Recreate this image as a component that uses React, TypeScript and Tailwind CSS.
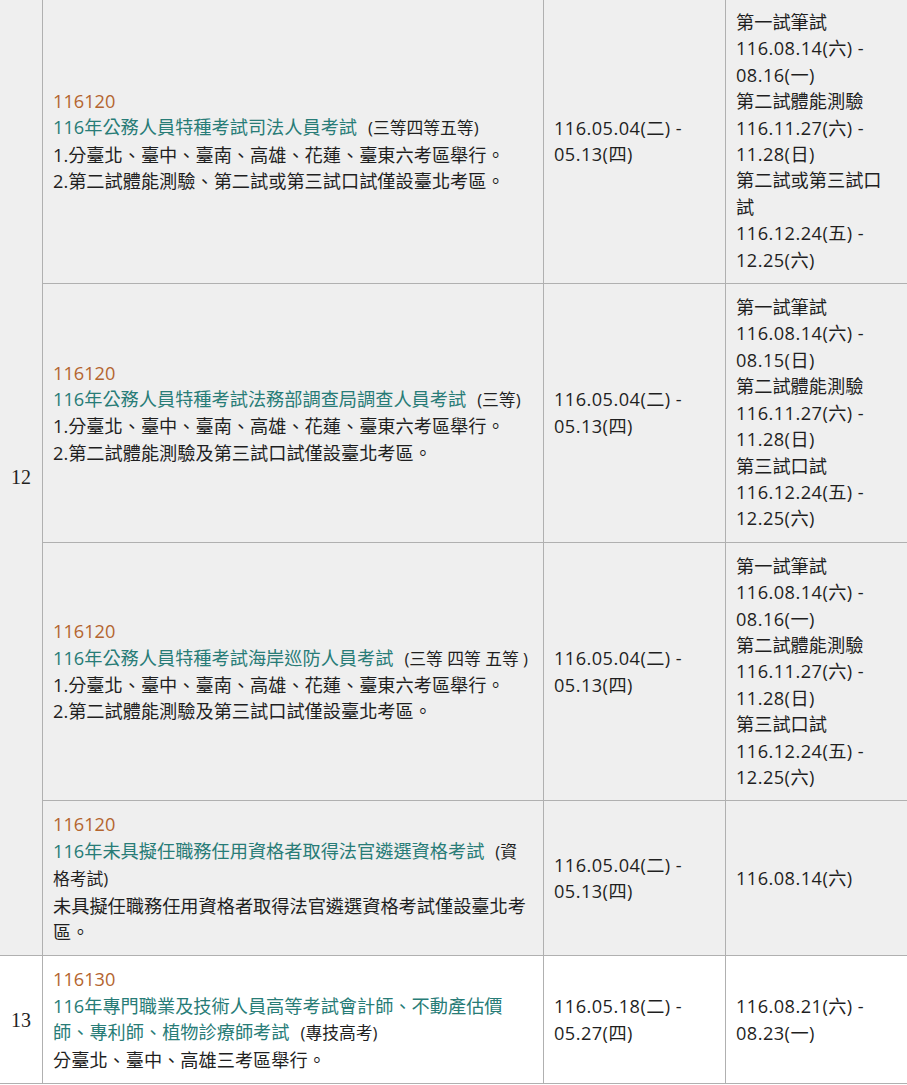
import React from "react";

const FONT = { fontFamily: '"Open Sans", "Noto Sans CJK TC", sans-serif' };

function Line({ children, date }: { children: React.ReactNode; date?: boolean }) {
  return <div className={`whitespace-nowrap ${date ? "tracking-[0.45px]" : ""}`}>{children}</div>;
}

const isDate = (s: string) => /^[0-9]/.test(s);

function Row({
  code,
  title,
  lines,
  apply,
  test,
  last,
}: {
  code: string;
  title: React.ReactNode[];
  lines: string[];
  apply: string[];
  test: string[];
  last?: boolean;
}) {
  return (
    <div className={`flex ${last ? "" : "border-b border-[#b0b0b0]"}`}>
      <div className="w-[501px] shrink-0 border-r border-[#b0b0b0] px-[10px] py-[10px] flex flex-col justify-center">
        <Line>
          <span className="text-[#b4652f]">{code}</span>
        </Line>
        {title}
        {lines.map((l, i) => (
          <Line key={i}>{l}</Line>
        ))}
      </div>
      <div className="w-[182px] shrink-0 border-r border-[#b0b0b0] px-[10px] py-[10px] flex flex-col justify-center">
        {apply.map((l, i) => (
          <Line key={i} date={isDate(l)}>
            {l}
          </Line>
        ))}
      </div>
      <div className="flex-1 px-[10px] py-[10px] flex flex-col justify-center">
        {test.map((l, i) => (
          <Line key={i} date={isDate(l)}>
            {l}
          </Line>
        ))}
      </div>
    </div>
  );
}

const T = ({ children }: { children: React.ReactNode }) => (
  <span className="text-[#287c77]">{children}</span>
);
const S = ({ children, ml = true }: { children: React.ReactNode; ml?: boolean }) => (
  <span className={`text-[16.8px] ${ml ? "ml-[11px]" : ""}`}>{children}</span>
);

function Num({ n }: { n: string }) {
  return (
    <div
      className="w-[43px] shrink-0 border-r border-[#b0b0b0] flex items-center justify-center text-[20px]"
      style={{ fontFamily: '"Liberation Serif", serif' }}
    >
      {n}
    </div>
  );
}

export default function App() {
  const apply1 = ["116.05.04(二) -", "05.13(四)"];
  return (
    <div
      className="w-[907px] h-[1085px] overflow-hidden bg-white text-[#1f1f1f] text-[18.2px] leading-[26.4px]"
      style={FONT}
    >
      <div className="-mt-px">
        {/* Row group 12 */}
        <div className="flex bg-[#efefef] border-b border-[#b0b0b0]">
          <Num n="12" />
          <div className="flex-1 flex flex-col">
            <Row
              code="116120"
              title={[
                <Line key="t">
                  <T>116年公務人員特種考試司法人員考試</T>
                  <S>(三等四等五等)</S>
                </Line>,
              ]}
              lines={[
                "1.分臺北、臺中、臺南、高雄、花蓮、臺東六考區舉行。",
                "2.第二試體能測驗、第二試或第三試口試僅設臺北考區。",
              ]}
              apply={apply1}
              test={[
                "第一試筆試",
                "116.08.14(六) -",
                "08.16(一)",
                "第二試體能測驗",
                "116.11.27(六) -",
                "11.28(日)",
                "第二試或第三試口",
                "試",
                "116.12.24(五) -",
                "12.25(六)",
              ]}
            />
            <Row
              code="116120"
              title={[
                <Line key="t">
                  <T>116年公務人員特種考試法務部調查局調查人員考試</T>
                  <S>(三等)</S>
                </Line>,
              ]}
              lines={[
                "1.分臺北、臺中、臺南、高雄、花蓮、臺東六考區舉行。",
                "2.第二試體能測驗及第三試口試僅設臺北考區。",
              ]}
              apply={apply1}
              test={[
                "第一試筆試",
                "116.08.14(六) -",
                "08.15(日)",
                "第二試體能測驗",
                "116.11.27(六) -",
                "11.28(日)",
                "第三試口試",
                "116.12.24(五) -",
                "12.25(六)",
              ]}
            />
            <Row
              code="116120"
              title={[
                <Line key="t">
                  <T>116年公務人員特種考試海岸巡防人員考試</T>
                  <S>(三等 四等 五等 )</S>
                </Line>,
              ]}
              lines={[
                "1.分臺北、臺中、臺南、高雄、花蓮、臺東六考區舉行。",
                "2.第二試體能測驗及第三試口試僅設臺北考區。",
              ]}
              apply={apply1}
              test={[
                "第一試筆試",
                "116.08.14(六) -",
                "08.16(一)",
                "第二試體能測驗",
                "116.11.27(六) -",
                "11.28(日)",
                "第三試口試",
                "116.12.24(五) -",
                "12.25(六)",
              ]}
            />
            <Row
              last
              code="116120"
              title={[
                <Line key="t">
                  <T>116年未具擬任職務任用資格者取得法官遴選資格考試</T>
                  <S>(資</S>
                </Line>,
                <Line key="t2">
                  <S ml={false}>格考試)</S>
                </Line>,
              ]}
              lines={["未具擬任職務任用資格者取得法官遴選資格考試僅設臺北考", "區。"]}
              apply={apply1}
              test={["116.08.14(六)"]}
            />
          </div>
        </div>
        {/* Row group 13 */}
        <div className="flex bg-white border-b border-[#b0b0b0]">
          <Num n="13" />
          <div className="flex-1 flex flex-col">
            <Row
              last
              code="116130"
              title={[
                <Line key="t">
                  <T>116年專門職業及技術人員高等考試會計師、不動產估價</T>
                </Line>,
                <Line key="t2">
                  <T>師、專利師、植物診療師考試</T>
                  <S>(專技高考)</S>
                </Line>,
              ]}
              lines={["分臺北、臺中、高雄三考區舉行。"]}
              apply={["116.05.18(二) -", "05.27(四)"]}
              test={["116.08.21(六) -", "08.23(一)"]}
            />
          </div>
        </div>
      </div>
    </div>
  );
}
